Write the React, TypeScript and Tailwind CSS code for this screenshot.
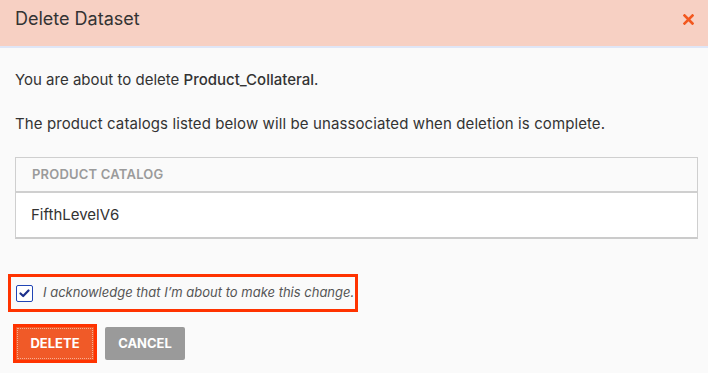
import React from 'react';

type Catalog = { name: string };

const catalogs: Catalog[] = [{ name: 'FifthLevelV6' }];

const CloseIcon = () => (
  <svg width="11" height="11" viewBox="0 0 11 11" fill="none">
    <path d="M1.5 1.5 L9.5 9.5 M9.5 1.5 L1.5 9.5" stroke="#f2581f" strokeWidth="2.6" strokeLinecap="square" />
  </svg>
);

const CheckIcon = () => (
  <svg width="11" height="9" viewBox="0 0 11 9" fill="none">
    <path d="M1.5 4.5 L4.2 7 L9.5 1.5" stroke="#1b2f8c" strokeWidth="2.2" strokeLinecap="round" strokeLinejoin="round" />
  </svg>
);

export default function App() {
  return (
    <div className="w-[708px] h-[373px] bg-[#fafafa] text-[#333] font-['Inter','Liberation_Sans',sans-serif] overflow-hidden">
      {/* header */}
      <div className="h-[48px] bg-[#f7d0c3] border-b-2 border-[#dfe6f7] flex items-start justify-between pl-[15px] pr-[14px] pt-[8px]">
        <h2 className="text-[18px] leading-[22px] text-[#333]">Delete Dataset</h2>
        <button className="mt-[6px]">
          <CloseIcon />
        </button>
      </div>

      <div className="px-[15px] pt-[21px]">
        <p className="text-[15px] leading-[22px]">
          You are about to delete <span className="font-medium">Product_Collateral</span>.
        </p>
        <p className="text-[15px] leading-[22px] tracking-[0.1px] mt-[22px]">
          The product catalogs listed below will be unassociated when deletion is complete.
        </p>

        {/* catalog table */}
        <div className="mt-[22px] w-[683px] border border-[#cfcfcf] border-b-2 border-b-[#cbcbcb]">
          <div className="h-[35px] bg-[#fafafa] border-b-2 border-[#cfcfcf] flex items-center px-[16px]">
            <span className="text-[13px] font-semibold tracking-[0.2px] text-[#9b9b9b]">PRODUCT CATALOG</span>
          </div>
          {catalogs.map((c) => (
            <div key={c.name} className="h-[44px] bg-white flex items-center px-[15px]">
              <span className="text-[15px] text-[#333]">{c.name}</span>
            </div>
          ))}
        </div>
      </div>

      {/* acknowledgement */}
      <div className="pl-[8px] mt-[35px]">
        <label className="w-[350px] h-[38px] border-[3px] border-[#ff3300] flex items-center gap-[10px] pl-[5px]">
          <span className="w-[17px] h-[17px] bg-white border-[1.5px] border-[#2145b5] rounded-[2px] flex items-center justify-center">
            <CheckIcon />
          </span>
          <span className="italic text-[13px] text-[#555]">I acknowledge that I’m about to make this change.</span>
        </label>
      </div>

      {/* actions */}
      <div className="flex items-center gap-[8px] pl-[13px] mt-[12px]">
        <button className="w-[84px] h-[39px] border-[3px] border-[#ff3300] bg-[#f05a28] text-white text-[13px] font-bold outline-dotted outline-1 outline-white/50 -outline-offset-[5px]">
          DELETE
        </button>
        <button className="w-[80px] h-[33px] rounded-[2px] bg-[#9a9a9a] text-white text-[13px] font-bold">
          CANCEL
        </button>
      </div>
    </div>
  );
}
